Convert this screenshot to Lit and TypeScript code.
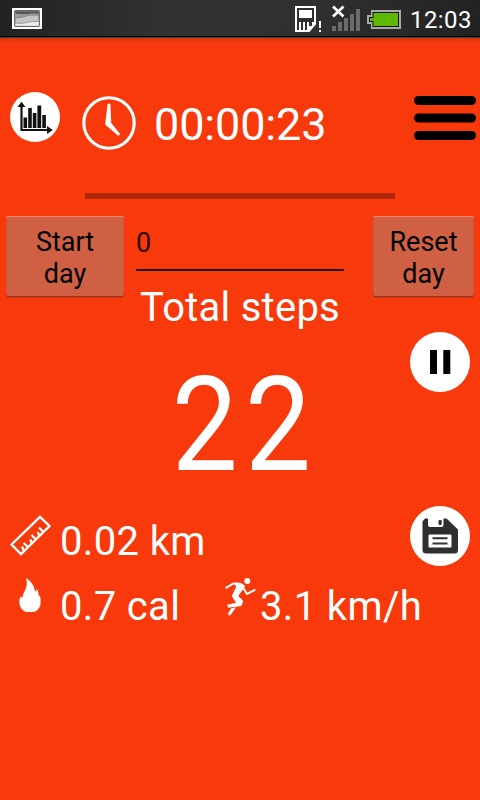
import { LitElement, html, css, svg } from "lit";
import { customElement, property } from "lit/decorators.js";

const SIGNAL = [5, 9, 13, 17, 22];

@customElement("status-bar")
class StatusBar extends LitElement {
  static styles = css`
    :host { display: flex; align-items: flex-start; box-sizing: border-box; width: 480px; height: 38px;
      background: linear-gradient(100deg, #222 0, #323232 35%, #303030 65%, #222 100%);
      border-bottom: 1px solid #444; box-shadow: inset 0 -1px #000; color: #fff;
      font: 24px/36px Roboto, sans-serif; }
    svg { display: block; flex: none; }
    .photo { margin: 8px auto 0 12px; }
    .sim { margin-top: 6px; }
    .signal { margin: 5px 0 0 10px; }
    .battery { margin: 10px 0 0 6px; }
    .time { width: 61px; margin: 2px 9px 0 9px; letter-spacing: 0.4px; white-space: nowrap; }
  `;
  render() {
    return html`
      <svg class="photo" width="30" height="21" viewBox="0 0 30 21">
        <rect width="30" height="21" fill="#fff" />
        <rect x="2.7" y="2.7" width="24.6" height="15.6" rx="1" fill="#c4c4c4" stroke="#666" stroke-width="1.3" />
        <path d="M3.3 3.3h23.4v2.6Q20 5.3 14 6.2T3.3 5.5z" fill="#555" />
        <path d="M3.3 5.5q6 1.7 10.7.7t12.7-.3v1.8q-8-.4-13 1T3.3 10z" fill="#9a9a9a" />
        <path d="M3.3 15q6 1.3 12-.5t11.4-.7v4H3.3z" fill="#ececec" />
        <path d="M3 10q7 0 11-2t12.5-.5M3 15q6 1 12-.6t11.5-.9" fill="none" stroke="#8a8a8a" stroke-width=".8" />
      </svg>
      <svg class="sim" width="27" height="27" viewBox="0 0 27 27">
        <path d="M1 1h19v17l-6 7H1z" fill="none" stroke="#fff" stroke-width="2" />
        <path d="M4 4h13v8H4zM4 16h2v8H4zM8 16h2v8H8zM12 16h2v8h-2zM17 16h2v2l-5 6v-4h3z" fill="#fff" />
        <path d="M24 15h2v7h-2zM24 24h2v2h-2z" fill="#fff" />
      </svg>
      <svg class="signal" width="29" height="27" viewBox="0 0 29 27">
        ${SIGNAL.map((h, i) => svg`<rect x=${i * 6} y=${26 - h} width="4" height=${h} fill="#6b6b6b" />`)}
        <path d="M1 1.500l10.500 10M11.500 1.500L1 11.500" stroke="#fff" stroke-width="2.700" />
      </svg>
      <svg class="battery" width="34" height="19" viewBox="0 0 34 19">
        <path d="M4 0h30v19H4v-5H0V5h4z" fill="#aaa" />
        <path d="M5.500 2H32v15H5.500v-5H2V7h3.500z" fill="#141414" />
        <path d="M6.500 3H31v13H6.500v-5H3V8h3.500z" fill="#5fb800" />
      </svg>
      <div class="time">12:03</div>`;
  }
}

@customElement("day-button")
class DayButton extends LitElement {
  static styles = css`
    :host { display: block; }
    button { display: block; box-sizing: border-box; width: 100%; height: 81px; padding: 3px 20px 0; margin: 0;
      border: 0; border-radius: 2px; background: #d06044; color: #000;
      box-shadow: inset 0 1px #e88468, inset 0 -1px #8c3520, inset 1px 0 #c4583e, inset -1px 0 #c4583e, 0 1px #d5370f;
      font: 27px/32px Roboto, sans-serif; text-align: center; white-space: pre-line; }
    .label { display: block; margin: 0 -15px; }
  `;
  @property() label = "";
  render() {
    return html`<button><span class="label">${this.label}</span></button>`;
  }
}

@customElement("app-root")
class AppRoot extends LitElement {
  static styles = css`
    :host { display: flex; flex-direction: column; width: 480px; height: 800px; overflow: hidden;
      background: #f8390b; color: #fff; font-family: Roboto, sans-serif; }
    svg { display: block; flex: none; }
    .strip { height: 5px; flex: none; background: linear-gradient(#d2340f, #f8390b); }
    .top { display: flex; align-items: flex-start; height: 104px; margin: 49px 4px 0 10px; }
    .clock { margin: 4px 0 0 22px; }
    .timer { margin: 6px auto 0 18px; font-size: 45px; line-height: 54px; letter-spacing: -0.15px; }
    .menu { margin-top: 4px; }
    .rule { height: 6px; flex: none; margin: -3px 85px 17px; background: linear-gradient(#c52c09, #ab2608 25%, #ab2608 75%, #c52c09); }
    .controls { display: flex; height: 68px; padding: 0 6px; }
    .start { width: 118px; }
    .reset { width: 101px; }
    .count { box-sizing: border-box; width: 208px; height: 55px; margin: 0 29px 0 12px; padding: 11px 0 0;
      border-bottom: 2px solid #1c0803; color: #2c0b03; font-size: 27px; line-height: 32px; }
    .title { height: 48px; text-align: center; font-size: 40px; line-height: 48px; letter-spacing: 0.25px; }
    .steps { display: grid; grid-template-columns: 70px 1fr 70px; height: 174px; }
    .total { grid-column: 2; margin-top: 23px; padding-left: 11px; text-align: center; font-size: 132px;
      line-height: 140px; letter-spacing: 8px; transform: scaleX(0.89); }
    .stats { display: grid; grid-template-columns: 60px 164px 36px 150px 60px; grid-template-rows: 65px 65px;
      font-size: 40px; line-height: 50px; letter-spacing: 0.35px; white-space: nowrap; }
    .value { margin-top: 11px; }
    .ruler { margin: 9px 0 0 10px; }
    .flame { margin: 7px 0 0 18px; }
    .runner { margin: 7px 0 0 1px; }
    .save { grid-column: 5; }
  `;
  render() {
    return html`
      <status-bar></status-bar>
      <div class="strip"></div>
      <div class="top">
        <svg width="50" height="50" viewBox="0 0 50 50">
          <circle cx="25" cy="25" r="25" fill="#fff" />
          <path d="M11.500 12v26H40" fill="none" stroke="#111" stroke-width="2.200" />
          <path d="M7.500 15L11.500 9.800 15.500 15zM37 34l5.800 4-5.800 4z" fill="#111" />
          <path d="M13.500 25.500h3.600V36h-3.600zM18.200 16h3.600v20h-3.600zM22.800 21h3.600v15h-3.600zM27.400 13.500h3.800V36h-3.800zM32.300 23h3.600v13h-3.600z" fill="#111" />
        </svg>
        <svg class="clock" width="54" height="54" viewBox="0 0 54 54">
          <circle cx="27" cy="27" r="25.200" fill="none" stroke="#fff" stroke-width="3.100" />
          <path d="M26 8h2l.8 19L37.800 38l-1.500 1.500L23.500 28.500z" fill="#fff" stroke="#fff" stroke-width=".7" stroke-linejoin="round" />
        </svg>
        <div class="timer">00:00:23</div>
        <svg class="menu" width="62" height="44" viewBox="0 0 62 44">
          <rect width="62" height="9" rx="4.500" />
          <rect y="17.500" width="62" height="9" rx="4.500" />
          <rect y="35" width="62" height="9" rx="4.500" />
        </svg>
      </div>
      <div class="rule"></div>
      <div class="controls">
        <day-button class="start" .label=${"Start\nday"}></day-button>
        <div class="count">0</div>
        <day-button class="reset" .label=${"Reset\nday"}></day-button>
      </div>
      <div class="title">Total steps</div>
      <div class="steps">
        <div class="total">22</div>
        <svg width="60" height="60" viewBox="0 0 60 60">
          <circle cx="30" cy="30" r="30" fill="#fff" />
          <path d="M20 18h7v24h-7zM33.300 18h7v24h-7z" />
        </svg>
      </div>
      <div class="stats">
        <svg class="ruler" width="42" height="42" viewBox="0 0 42 42">
          <path d="M1.500 29.500L30 1.800 39.500 11 11 39z" fill="none" stroke="#fff" stroke-width="2.400" />
          <path d="M14 36.500l-2-5M18 32l-4.500-4M22 28.500l-1.800-4M26 24.500L21.500 20M29.500 21l-1.800-4M33.500 17L29 12.500" stroke="#fff" stroke-width="2.200" />
        </svg>
        <div class="value">0.02 km</div>
        <svg class="save" width="60" height="60" viewBox="0 0 60 60">
          <circle cx="30" cy="30" r="30" fill="#fff" />
          <path d="M15 12.500h3v6.500q0 2 2 2h11.500q2 0 2-2v-6.500h3L48 23.500V44q0 3.500-3.500 3.500h-28Q12.500 47.500 12.500 44V15.500z" fill="#2f2f2f" />
          <rect x="28.500" y="14" width="3.200" height="5" rx="1.200" fill="#2f2f2f" />
          <rect x="18.500" y="28.500" width="23" height="13" rx="1" fill="#fff" />
          <path d="M22.500 32.300h15M22.500 37.500h15" stroke="#333" stroke-width="2" />
        </svg>
        <svg class="flame" width="24" height="36" viewBox="0 0 24 36">
          <path d="M8 0C13 3 16.500 8 17 13.500q1.500-.5 1.800-2.500c2 3 1.200 6 3.500 8q.7 4.500 0 8.500C20.500 32 17.500 34 15 34H9c-4-.5-7-4.500-7.500-8-.8-3 .2-5.500 1.500-8 .3 1 .7 1.500 1.500 1.800C5 13 11 10 8 0z" fill="#fff" />
        </svg>
        <div class="value">0.7 cal</div>
        <svg class="runner" width="32" height="39" viewBox="0 0 32 39">
          <circle cx="22.300" cy="3" r="3" fill="#fff" />
          <path d="M.6 10.200L8.300 5.500l8 1.500M17.500 9l4.500 7 8.300-4.300" fill="none" stroke="#fff" stroke-width="2" />
          <path d="M9.700 4.300L16 5l4.300 3-7 10 5 5-2 5L3 29.700l-.7-3L11 24.700 6.700 18 11 9.300z" fill="#fff" />
          <path d="M11 29.300L5 37.700 2.700 36l3.600-5.700z" fill="#fff" />
        </svg>
        <div class="value">3.1 km/h</div>
      </div>`;
  }
}
